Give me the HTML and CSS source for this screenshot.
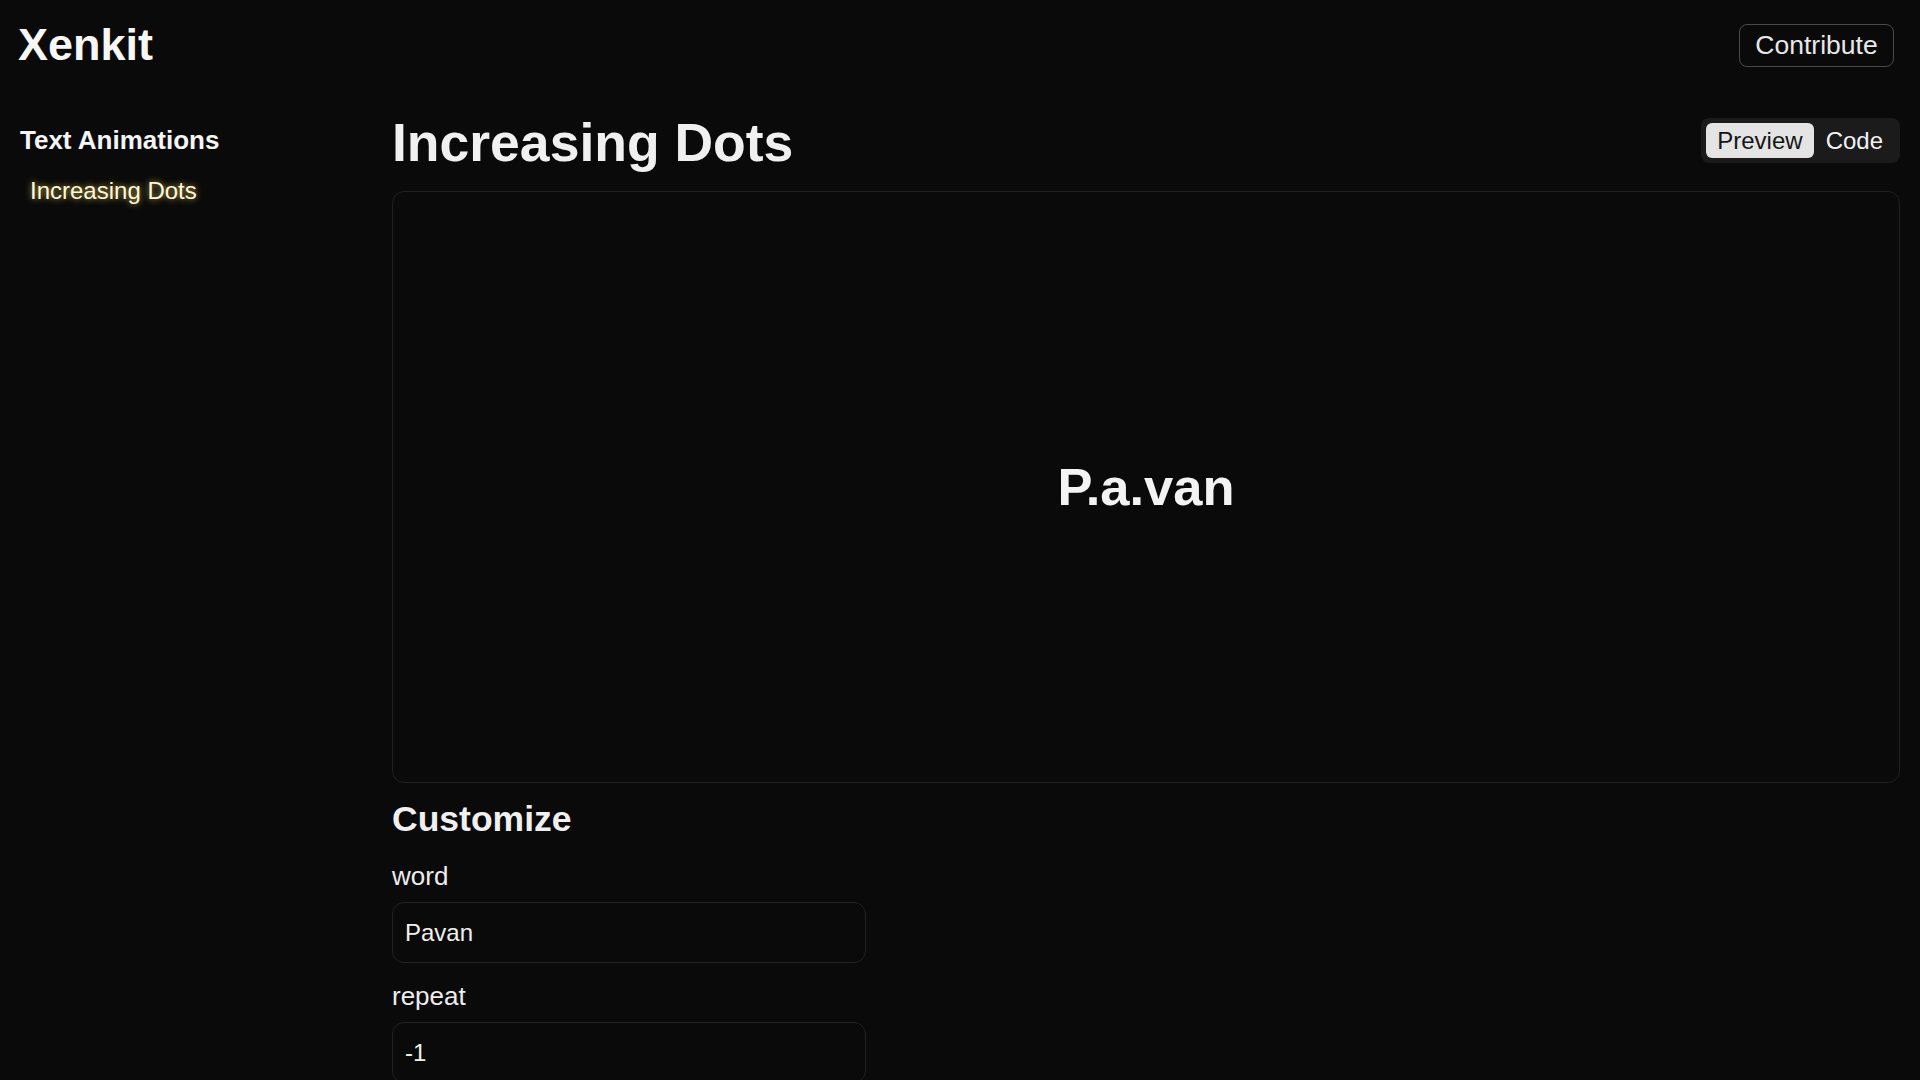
FILE: index.html
```html
<!DOCTYPE html>
<html lang="en">
<head>
<meta charset="utf-8">
<title>Xenkit - Increasing Dots</title>
<link rel="stylesheet" href="styles.css">
</head>
<body>
<header class="topbar">
  <div class="logo">Xenkit</div>
  <button class="contribute">Contribute</button>
</header>
<div class="layout">
  <aside class="sidebar">
    <div class="side-title">Text Animations</div>
    <div class="side-item">Increasing Dots</div>
  </aside>
  <main class="main">
    <div class="title-row">
      <h1 class="page-title">Increasing Dots</h1>
      <div class="toggle">
        <button class="tab tab-active">Preview</button>
        <button class="tab">Code</button>
      </div>
    </div>
    <section class="preview">
      <div class="demo-word">P.a.van</div>
    </section>
    <h2 class="custom-title">Customize</h2>
    <div class="field">
      <label class="field-label">word</label>
      <div class="field-input">Pavan</div>
    </div>
    <div class="field">
      <label class="field-label">repeat</label>
      <div class="field-input">-1</div>
    </div>
  </main>
</div>
</body>
</html>
```
FILE: styles.css
```css
html, body {
  margin: 0;
  padding: 0;
  height: 100%;
  overflow: hidden;
}
body {
  background: #0a0a0a;
  color: #f2f2f2;
  font-family: "Liberation Sans", Arial, sans-serif;
}
.topbar {
  display: flex;
  align-items: center;
  justify-content: space-between;
  padding: 18px 26px 0 18px;
  height: 54px;
}
.logo {
  font-size: 45px;
  line-height: 54px;
  font-weight: 700;
  color: #f7f7f7;
}
.contribute {
  font-family: inherit;
  font-size: 26.5px;
  line-height: 29px;
  height: 43px;
  width: 155px;
  padding: 0;
  background: #0a0a0a;
  color: #e8e8e8;
  border: 1.5px solid #4a4a4a;
  border-radius: 8px;
}
.layout {
  display: flex;
}
.sidebar {
  flex: none;
  padding: 50px 0 0 20px;
  box-sizing: border-box;
  width: 392px;
}
.side-title {
  font-size: 26px;
  line-height: 36px;
  font-weight: 700;
  color: #f5f5f5;
}
.side-item {
  margin-top: 15px;
  padding-left: 10px;
  font-size: 24px;
  line-height: 36px;
  color: #fdf8dc;
  text-shadow: 0 0 6px rgba(250, 214, 90, 0.8);
}
.main {
  flex: 1;
  padding: 43px 20px 0 0;
}
.title-row {
  display: flex;
  justify-content: space-between;
  align-items: flex-start;
}
.page-title {
  margin: 0;
  font-size: 53.5px;
  line-height: 56px;
  font-weight: 700;
  color: #f0f0f0;
}
.toggle {
  display: flex;
  margin-top: 3px;
  padding: 5px;
  background: #1b1b1b;
  border-radius: 8px;
}
.tab {
  font-family: inherit;
  font-size: 24px;
  line-height: 35px;
  height: 35px;
  padding: 0 12px;
  border: none;
  border-radius: 6px;
  background: transparent;
  color: #f2f2f2;
}
.tab-active {
  background: #e4e4e4;
  color: #161616;
  padding: 0 11px;
}
.preview {
  margin-top: 20px;
  height: 592px;
  box-sizing: border-box;
  border: 1px solid #202020;
  border-radius: 12px;
  display: flex;
  align-items: center;
  justify-content: center;
}
.demo-word {
  font-size: 52.5px;
  font-weight: 700;
  line-height: 60px;
  color: #f3f3f3;
}
.custom-title {
  margin: 14px 0 0 0;
  font-size: 35.5px;
  line-height: 44px;
  font-weight: 700;
  color: #f0f0f0;
}
.field {
  margin-top: 17px;
  width: 474px;
}
.field + .field {
  margin-top: 15px;
}
.field-label {
  display: block;
  font-size: 26px;
  line-height: 36px;
  color: #ededed;
}
.field-input {
  margin-top: 8px;
  height: 61px;
  box-sizing: border-box;
  border: 1px solid #222222;
  border-radius: 12px;
  padding: 0 12px;
  font-size: 24px;
  line-height: 59px;
  color: #f0f0f0;
}
```
